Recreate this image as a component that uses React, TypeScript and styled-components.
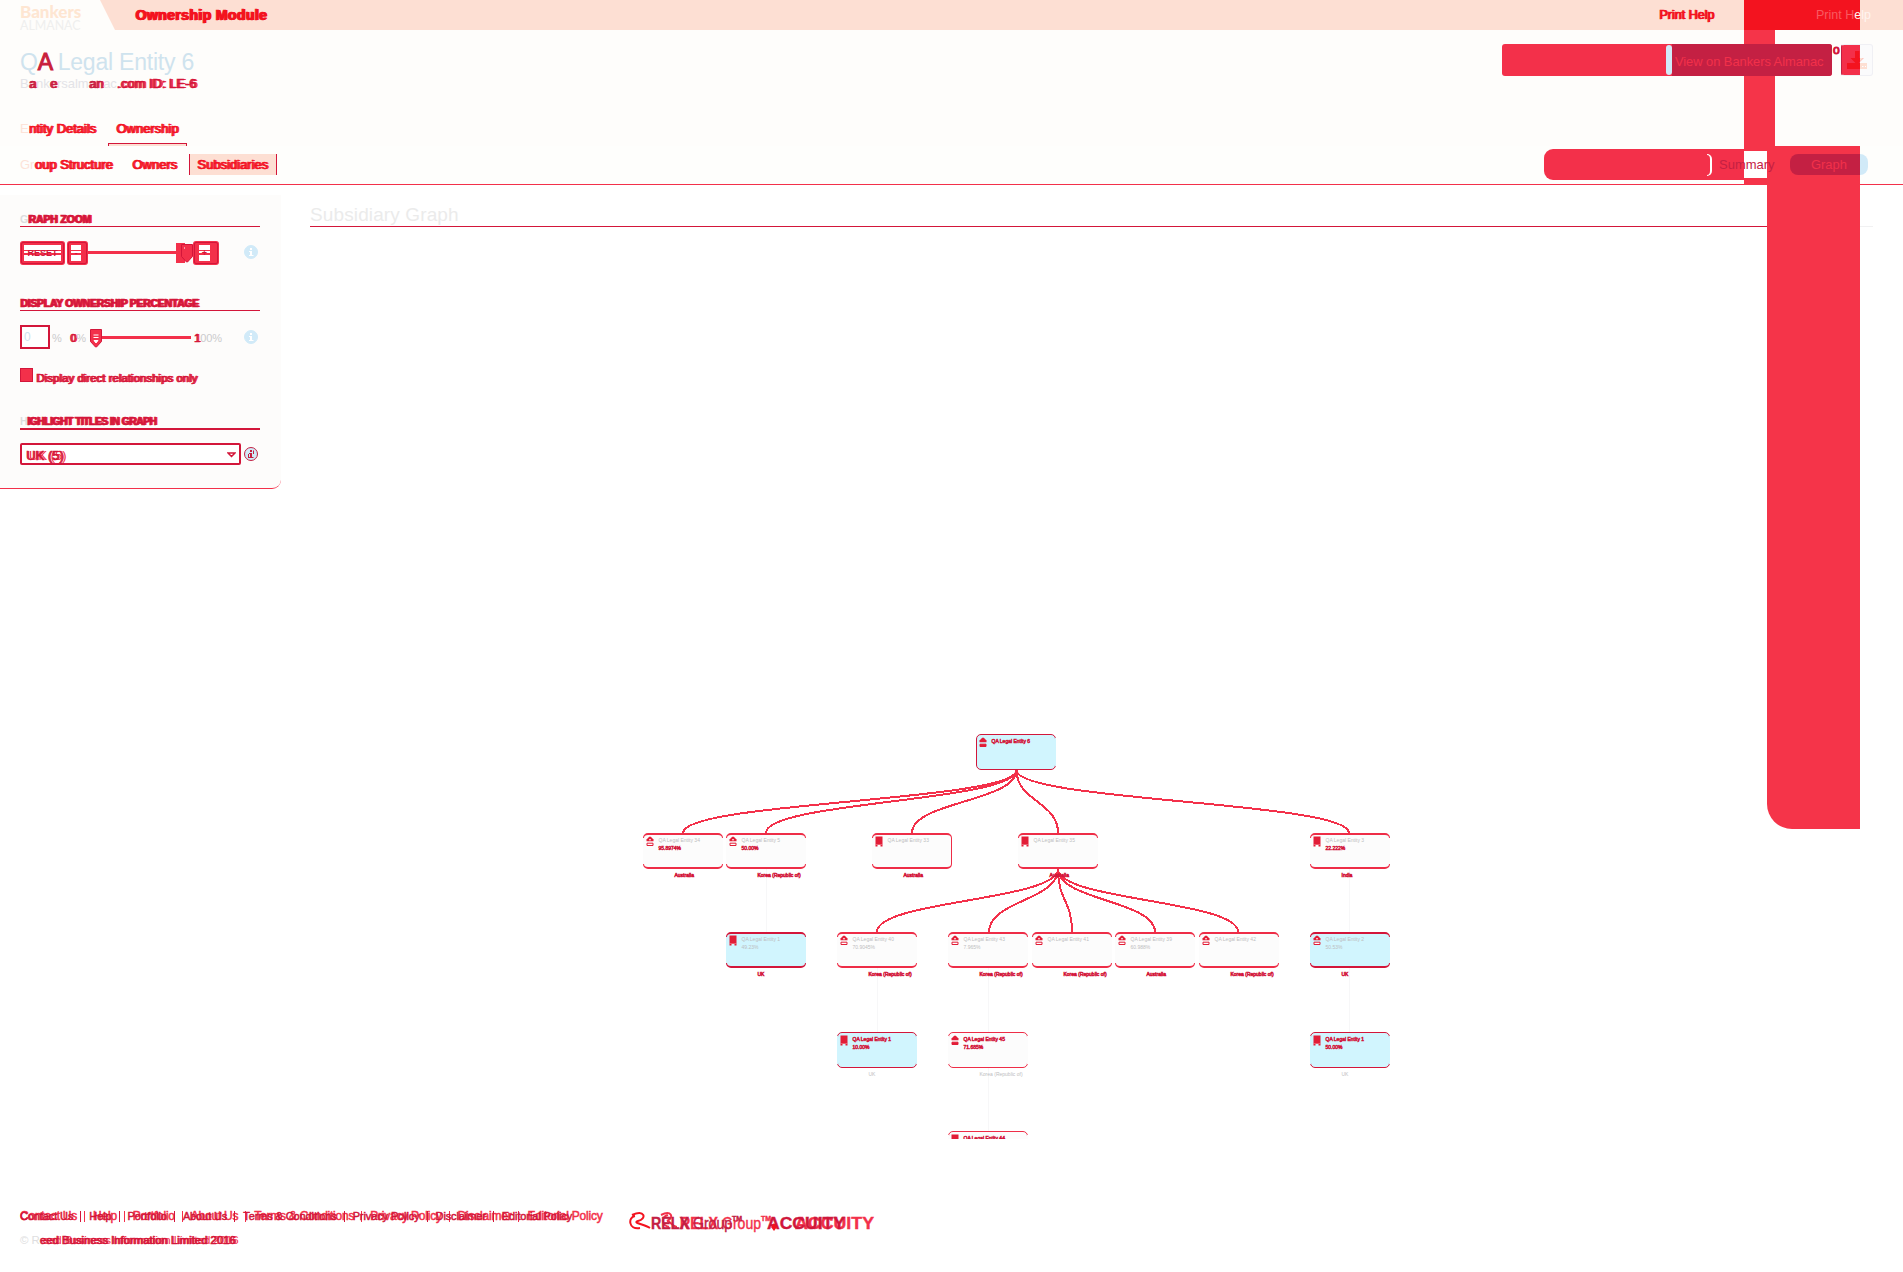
import React from "react";
import styled, { createGlobalStyle, css } from "styled-components";

const HOT = "#f3304a";
const PURE = "#f3131f";
const DEEP = "#d3163a";
const WINE = "#c42043";
const PEACH = "#fddfd3";
const SKY = "#d1eaf8";

const Global = createGlobalStyle`
  * { box-sizing: border-box; }
  body { margin: 0; background: #fff; font-family: "Liberation Sans", Arial, sans-serif; overflow: hidden; }
`;

const smear = css<{ $shift?: number; $c?: string; $g?: string }>`
  color: ${(p) => p.$c ?? DEEP};
  -webkit-text-stroke: 0.5px ${(p) => p.$c ?? DEEP};
  text-shadow: ${(p) => p.$shift ?? 1.5}px 0 ${(p) => p.$g ?? HOT}, 1px 0 ${(p) => p.$g ?? HOT};
`;

const Page = styled.div`
  position: relative;
  width: 1903px;
  height: 1272px;
  overflow: hidden;
  display: flex;
  flex-direction: column;
`;

const Band = styled.div<{ $x: number; $y: number; $w: number; $h: number; $c?: string; $r?: string }>`
  position: absolute;
  left: ${(p) => p.$x}px;
  top: ${(p) => p.$y}px;
  width: ${(p) => p.$w}px;
  height: ${(p) => p.$h}px;
  background: ${(p) => p.$c ?? "#f53449"};
  border-radius: ${(p) => p.$r ?? 0};
`;

const TopBar = styled.header`
  height: 30px;
  flex: none;
  display: flex;
  background: ${PEACH};
`;

const Brand = styled.div`
  width: 115px;
  height: 30px;
  padding: 4px 0 0 20px;
  background: #fefdfb;
  clip-path: polygon(0 0, 100px 0, 100% 100%, 0 100%);
  display: flex;
  flex-direction: column;
  font-family: Lato, sans-serif;
`;
const BrandTop = styled.span`
  font-size: 17px;
  line-height: 16px;
  font-weight: 900;
  color: #fee6d2;
`;
const BrandSub = styled.span`
  font-size: 12.4px;
  line-height: 12px;
  color: #efefee;
  white-space: nowrap;
`;

const ModuleName = styled.span`
  margin-left: 20px;
  font-size: 14px;
  line-height: 31px;
  font-weight: 700;
  letter-spacing: 0.4px;
  ${smear}
`;

const TopLinks = styled.div`
  position: relative;
  z-index: 2;
  margin-left: auto;
  width: 244px;
  display: flex;
  font-size: 12.5px;
  line-height: 30px;
`;
const HotLinks = styled.span`
  width: 157px;
  ${smear}
`;
const PaleLinks = styled.span`
  color: #fff5f0;
`;
const Tinted = styled.span<{ $c: string }>`
  color: ${(p) => p.$c};
`;

const Masthead = styled.section`
  height: 116px;
  flex: none;
  display: flex;
  justify-content: space-between;
  padding: 0 30px 0 20px;
  background: #fefdfb;
`;
const Identity = styled.div`
  display: flex;
  flex-direction: column;
`;
const Title = styled.h1`
  margin: 18px 0 0;
  font-size: 23px;
  line-height: 28px;
  font-weight: 400;
  color: #cfe3ee;
  letter-spacing: -0.22px;
  white-space: nowrap;
`;
const Struck = styled.span`
  color: #c9203b;
  -webkit-text-stroke: 1px #c9203b;
`;
const Ref = styled.div`
  margin-top: -1px;
  font-size: 13px;
  line-height: 18px;
  color: #e3e3e7;
  white-space: nowrap;
`;
const Smear = styled.span<{ $shift?: number; $c?: string; $g?: string }>`
  ${smear}
`;
const Faint = styled.span<{ $c?: string }>`
  color: ${(p) => p.$c ?? "#fde3d8"};
`;

const Tabs = styled.nav`
  display: flex;
  margin-top: 23px;
  font-size: 13px;
  gap: 10px;
`;
const Tab = styled.span<{ $active?: boolean }>`
  height: 26px;
  line-height: 26px;
  width: ${(p) => (p.$active ? "79px" : "78px")};
  padding-left: ${(p) => (p.$active ? "8px" : 0)};
  white-space: nowrap;
`;
const TabEdge = styled.div`
  width: 79px;
  height: 3px;
  margin: 1px 0 0 88px;
  background: ${PEACH};
  border: 1px solid ${DEEP};
  border-bottom: 0;
`;

const Actions = styled.div`
  position: relative;
  z-index: 2;
  display: flex;
  align-items: flex-start;
  padding-top: 14px;
`;
const AlmanacButton = styled.div`
  display: flex;
  width: 330px;
  height: 32px;
  background: ${HOT};
  border-radius: 3px;
  overflow: hidden;
`;
const Sliver = styled.i`
  flex: none;
  margin: 1px 0 0 164px;
  width: 6px;
  height: 30px;
  border-radius: 3px;
  background: ${SKY};
`;
const ButtonText = styled.span`
  flex: 1;
  padding-left: 3px;
  background: ${WINE};
  color: #f2304a;
  font-size: 13px;
  line-height: 35px;
  letter-spacing: -0.1px;
  white-space: nowrap;
`;
const Speck = styled.span`
  width: 9px;
  padding: 0 0 0 1px;
  font-size: 12px;
  line-height: 13px;
  color: ${DEEP};
  -webkit-text-stroke: 1px ${DEEP};
`;
const Download = styled.div`
  width: 32px;
  height: 32px;
  border: 1px solid #f0f0f4;
  border-left-color: ${WINE};
  border-radius: 3px;
  background: linear-gradient(90deg, ${HOT} 18px, #fbfbfc 18px);
`;

const SubNav = styled.nav`
  height: 39px;
  flex: none;
  display: flex;
  padding: 8px 32px 0 20px;
  background: linear-gradient(#fefefc 38px, ${HOT} 38px);
  font-size: 13px;
`;
const SubItem = styled.span<{ $w: number; $on?: boolean }>`
  width: ${(p) => p.$w}px;
  height: 21px;
  line-height: 21px;
  white-space: nowrap;
  ${(p) =>
    p.$on &&
    css`
      padding-left: 7px;
      background: ${PEACH};
      border: solid ${DEEP};
      border-width: 0 1px;
    `}
`;
const Toggle = styled.div`
  position: relative;
  z-index: 2;
  margin: -5px 0 0 auto;
  width: 327px;
  height: 31px;
  display: flex;
  align-items: center;
`;
const ToggleFill = styled.span`
  display: flex;
  justify-content: flex-end;
  align-items: center;
  width: 168px;
  height: 31px;
  border-radius: 9px 0 0 9px;
  background: ${HOT};
`;
const Bracket = styled.i`
  width: 5px;
  height: 22px;
  border: 2px solid #fff;
  border-left: 0;
  border-top-width: 1px;
  border-bottom-width: 1px;
  border-radius: 0 5px 5px 0;
`;
const ToggleText = styled.span`
  width: 78px;
  height: 31px;
  padding-left: 7px;
  font-size: 13px;
  line-height: 31px;
  color: ${WINE};
  background: linear-gradient(90deg, ${HOT} 32px, transparent 32px);
`;
const Pill = styled.span`
  width: 78px;
  height: 21px;
  border-radius: 8px;
  background: linear-gradient(90deg, ${WINE} 70px, ${SKY} 70px);
  color: #f2304a;
  font-size: 13px;
  line-height: 21px;
  text-align: center;
`;

const Body = styled.main`
  display: flex;
  height: 1000px;
  flex: none;
  align-items: flex-start;
`;
const Sidebar = styled.aside`
  width: 281px;
  height: 294px;
  margin-top: 10px;
  padding: 16px 21px 0 20px;
  background: #fdfcfb;
  border-bottom: 1px solid ${HOT};
  border-bottom-right-radius: 9px;
  display: flex;
  flex-direction: column;
`;
const GroupTitle = styled.h2<{ $thick?: boolean; $ls?: number; $mt?: number }>`
  margin: ${(p) => p.$mt ?? 0}px 0 0;
  height: ${(p) => (p.$thick ? 17 : 16)}px;
  font-size: 10.5px;
  line-height: 16px;
  font-weight: 700;
  letter-spacing: ${(p) => p.$ls ?? 0}px;
  border-bottom: ${(p) => (p.$thick ? 2 : 1)}px solid ${DEEP};
  white-space: nowrap;
`;
const Controls = styled.div<{ $h: number; $mt: number }>`
  display: flex;
  align-items: center;
  height: ${(p) => p.$h}px;
  margin-top: ${(p) => p.$mt}px;
`;
const Key = styled.span<{ $w: number; $l: number; $r: number; $gap?: number }>`
  flex: none;
  width: ${(p) => p.$w}px;
  height: 24px;
  margin-left: ${(p) => p.$gap ?? 0}px;
  border: solid ${HOT};
  border-width: 4px ${(p) => p.$r}px 4px ${(p) => p.$l}px;
  border-radius: 3px;
  outline: 1px solid ${DEEP};
  outline-offset: -2px;
  font-size: 9px;
  line-height: 16px;
  text-align: center;
  font-weight: 700;
  color: ${DEEP};
  background: linear-gradient(#fff 5px, ${HOT} 5px 6px, #fff 6px 8px, ${HOT} 8px 10px, #fff 10px);
`;
const Rail = styled.i<{ $w: number }>`
  width: ${(p) => p.$w}px;
  height: 3px;
  background: ${HOT};
`;
const Grip = styled.i<{ $w: number }>`
  width: ${(p) => p.$w}px;
  height: 20px;
  display: flex;
  justify-content: flex-end;
  background: ${(p) => (p.$w > 13 ? `linear-gradient(90deg, ${HOT} 9px, transparent 9px)` : "none")};
`;
const InfoSlot = styled.span`
  margin-left: auto;
  margin-right: 1px;
  width: 15px;
  height: 15px;
  display: flex;
`;
const PercentBox = styled.span`
  width: 30px;
  height: 24px;
  border: 2px solid ${DEEP};
  background: #fff;
  padding-left: 2px;
  line-height: 21px;
  font-size: 12px;
  color: #cfe3ee;
`;
const Unit = styled.span<{ $w: number; $pl: number }>`
  width: ${(p) => p.$w}px;
  padding: 1px 0 0 ${(p) => p.$pl}px;
  font-size: 11px;
  color: #cbcbcd;
  white-space: nowrap;
`;
const Check = styled.i`
  width: 13px;
  height: 14px;
  margin-right: 3px;
  background: ${HOT};
  border: 1px solid ${DEEP};
`;
const CheckText = styled.span`
  padding-top: 5px;
  font-size: 11.5px;
  white-space: nowrap;
`;
const SelectBox = styled.div`
  width: 221px;
  height: 22px;
  display: flex;
  align-items: center;
  justify-content: space-between;
  padding: 3px 3px 0 4px;
  border: 2px solid ${DEEP};
  border-radius: 2px;
  background: #fff;
  font-size: 13px;
`;

const GraphHead = styled.div`
  width: 1563px;
  height: 42px;
  margin-left: 29px;
  padding-top: 18px;
  background:
    linear-gradient(${DEEP}, ${DEEP}) 0 100% / 1457px 1px no-repeat,
    linear-gradient(#f1f1f2, #f1f1f2) 0 100% / 100% 1px no-repeat;
  font-size: 19px;
  line-height: 23px;
  color: #ebebeb;
  letter-spacing: 0.12px;
`;

const Canvas = styled.div`
  position: absolute;
  left: 0;
  top: 227px;
  width: 1740px;
  height: 912px;
  overflow: hidden;
`;
const Wires = styled.svg`
  position: absolute;
  left: 0;
  top: 0;
`;
const Node = styled.div<{ $x: number; $y: number; $blue?: boolean; $thin?: boolean; $edge?: "left" | "right" }>`
  position: absolute;
  left: ${(p) => p.$x - 0.5}px;
  top: ${(p) => p.$y - 227}px;
  width: 80px;
  height: 36px;
  display: flex;
  padding: ${(p) => (p.$thin ? 2 : 1)}px 0 0 2px;
  border: ${(p) => (p.$thin ? 1 : 2)}px solid ${(p) => (p.$blue ? DEEP : "#ee2d47")};
  border-left-width: 1px;
  border-right-width: 1px;
  border-radius: 5px;
  background: ${(p) => (p.$blue ? "#d1f5fe" : "#fcfcfc")};
  &::before,
  &::after {
    content: "";
    position: absolute;
    top: 3px;
    bottom: 3px;
    width: 1px;
    background: ${(p) => (p.$blue ? "#d1f5fe" : "#fcfcfc")};
  }
  &::before {
    left: -1px;
    display: ${(p) => (p.$edge === "left" ? "none" : "block")};
  }
  &::after {
    right: -1px;
    display: ${(p) => (p.$edge === "right" ? "none" : "block")};
  }
`;
const NodeText = styled.div`
  display: flex;
  flex-direction: column;
  margin: 0 0 0 5px;
  font-size: 5px;
  line-height: 8px;
  color: #bdbdc0;
  white-space: nowrap;
`;
const Line = styled.span<{ $hot?: boolean }>`
  ${(p) =>
    p.$hot &&
    css`
      color: ${DEEP};
      -webkit-text-stroke: 0.5px ${DEEP};
    `}
`;
const Country = styled.span<{ $x: number; $y: number; $hot?: boolean }>`
  position: absolute;
  left: ${(p) => p.$x - 0.5}px;
  top: ${(p) => p.$y - 227}px;
  font-size: 5px;
  line-height: 9px;
  white-space: nowrap;
  color: ${(p) => (p.$hot ? DEEP : "#bdbdc0")};
  -webkit-text-stroke: ${(p) => (p.$hot ? 0.6 : 0)}px ${DEEP};
`;

const Footer = styled.footer`
  position: absolute;
  left: 20px;
  top: 1207px;
  display: grid;
  grid-template-columns: 609px 260px;
  grid-template-rows: 24px 22px;
`;
const Layer = styled.div<{ $size: number; $c: string; $ls: number }>`
  grid-column: 1;
  grid-row: 1;
  display: flex;
  white-space: nowrap;
  font-size: ${(p) => p.$size}px;
  line-height: 19px;
  letter-spacing: ${(p) => p.$ls}px;
  color: ${(p) => p.$c};
  -webkit-text-stroke: 0.5px ${(p) => p.$c};
`;
const FootLink = styled.span<{ $last?: boolean }>`
  padding-right: 8px;
  margin-right: 8px;
  background: ${(p) => (p.$last ? "none" : "linear-gradient(currentColor, currentColor) 100% 4px / 1px 11px no-repeat")};
`;
const Copy = styled.div`
  grid-column: 1;
  grid-row: 2;
  font-size: 11.5px;
  line-height: 19px;
  letter-spacing: -0.08px;
  color: #dedee0;
  white-space: nowrap;
`;
const LogoSlot = styled.div`
  grid-column: 2;
  grid-row: 1 / 3;
`;

const Info = ({ hot }: { hot?: boolean }) => (
  <InfoSlot>
    <svg width="15" height="15" viewBox="0 0 15 15">
      <circle cx="7" cy="7" r="6.500" fill={SKY} stroke={hot ? WINE : SKY} />
      <path d="M6 6h2v5H6zM5 6h1v1H5zM5 10h4.500v1H5zM6 3h2v2H6z" fill={hot ? WINE : "#fff"} />
      {hot && <path d="M4.500 11V7M9.500 3.500V7" stroke={WINE} strokeWidth="1" />}
    </svg>
  </InfoSlot>
);

const GripShape = ({ lines }: { lines?: boolean }) => (
  <svg width="12" height="20" viewBox="0 0 12 20" overflow="visible">
    <g transform={lines ? "translate(0 2)" : "translate(0 1)"}>
      <path d="M.5.500h11v12l-5 5.500h-1l-5-5.500z" fill={HOT} stroke={DEEP} />
      {lines ? <path d="M3.500 6h5M3.500 8.500h5M4 11.500h4l-2 2.500z" stroke="#fff" fill="#fff" /> : <path d="M3 4h1" stroke="#fff" />}
    </g>
  </svg>
);

const NodeIcon = ({ kind, solid }: { kind: "bank" | "tower"; solid?: boolean }) => (
  <svg width="8" height="11" viewBox="0 0 8 11">
    {kind === "bank" ? (
      <>
        <path d="M.5 5.200V3.600L3.200.8h1.600l2.700 2.800v1.600z" fill="#e21d37" />
        {!solid && <path d="M3 3.800h2" stroke="#fff" strokeWidth="1" />}
        <path d="M1 7.200h6v2.300H1z" fill={solid ? "#e21d37" : "#fff"} stroke="#e21d37" />
      </>
    ) : (
      <>
        <path d="M.5.500h7v10H5.500V9h-3v1.500h-2z" fill="#e21d37" />
        <path d="M.5 8.500h7" stroke="#f7a0ab" strokeWidth=".5" />
      </>
    )}
  </svg>
);

interface Entity {
  x: number;
  y: number;
  n: string;
  pct?: string;
  place?: string;
  kind: "bank" | "tower";
  blue?: boolean;
  thin?: boolean;
  hotName?: boolean;
  hotPct?: boolean;
  coolPlace?: boolean;
  edge?: "left" | "right";
}

const entities: Entity[] = [
  { x: 976, y: 734, n: "6", kind: "bank", blue: true, thin: true, hotName: true, edge: "left" },
  { x: 643, y: 833, n: "34", pct: "95.8974%", place: "Australia", kind: "bank", hotPct: true },
  { x: 726, y: 833, n: "5", pct: "50.00%", place: "Korea (Republic of)", kind: "bank", hotPct: true },
  { x: 872, y: 833, n: "33", place: "Australia", kind: "tower", edge: "right" },
  { x: 1018, y: 833, n: "35", place: "Australia", kind: "tower" },
  { x: 1310, y: 833, n: "3", pct: "22.222%", place: "India", kind: "tower", hotPct: true },
  { x: 726, y: 932, n: "1", pct: "49.23%", place: "UK", kind: "tower", blue: true },
  { x: 837, y: 932, n: "40", pct: "70.9045%", place: "Korea (Republic of)", kind: "bank" },
  { x: 948, y: 932, n: "43", pct: "7.965%", place: "Korea (Republic of)", kind: "bank" },
  { x: 1032, y: 932, n: "41", place: "Korea (Republic of)", kind: "bank" },
  { x: 1115, y: 932, n: "39", pct: "60.988%", place: "Australia", kind: "bank" },
  { x: 1199, y: 932, n: "42", place: "Korea (Republic of)", kind: "bank" },
  { x: 1310, y: 932, n: "2", pct: "50.53%", place: "UK", kind: "bank", blue: true },
  { x: 837, y: 1032, n: "1", pct: "10.00%", place: "UK", kind: "tower", blue: true, thin: true, hotName: true, hotPct: true, coolPlace: true },
  { x: 948, y: 1032, n: "45", pct: "71.685%", place: "Korea (Republic of)", kind: "bank", thin: true, hotName: true, hotPct: true, coolPlace: true },
  { x: 1310, y: 1032, n: "1", pct: "50.00%", place: "UK", kind: "tower", blue: true, thin: true, hotName: true, hotPct: true, coolPlace: true },
  { x: 948, y: 1131, n: "44", kind: "tower", thin: true, hotName: true },
];

const stems = ["M766.500 869V932", "M877.500 968V1032", "M988.500 968V1131", "M1349.500 869V1032"];

const curve = (sx: number, sy: number, tx: number, ty: number) => {
  const mid = (sy + ty) / 2;
  return `M${sx} ${sy}C${sx} ${mid} ${tx} ${mid} ${tx} ${ty}`;
};

const footLinks = ["Contact Us", "Help", "Portfolio", "About Us", "Terms & Conditions", "Privacy Policy", "Disclaimer", "Editorial Policy"];

const App = () => (
  <>
    <Global />
    <Page>
      <TopBar>
        <Brand>
          <BrandTop>Bankers</BrandTop>
          <BrandSub>ALMANAC</BrandSub>
        </Brand>
        <ModuleName $c={PURE} $g={PURE}>Ownership Module</ModuleName>
        <TopLinks>
          <HotLinks $c={PURE} $g={PURE} $shift={1}>Print Help</HotLinks>
          <PaleLinks>
            <Tinted $c="#f95a60">Print H</Tinted>elp
          </PaleLinks>
        </TopLinks>
      </TopBar>

      <Masthead>
        <Identity>
          <Title>Q<Struck>A</Struck> Legal Entity 6</Title>
          <Ref>
            B<Smear $c={WINE}>a</Smear>nk<Smear $c={WINE}>e</Smear>rsalm<Smear $c={WINE}>an</Smear>ac
            <Smear $shift={2}>.com ID: LE-6</Smear>
          </Ref>
          <Tabs>
            <Tab><Faint>E</Faint><Smear $c={PURE}>ntity Details</Smear></Tab>
            <Tab $active><Smear $c={PURE}>Ownership</Smear></Tab>
          </Tabs>
          <TabEdge />
        </Identity>
        <Actions>
          <AlmanacButton>
            <Sliver />
            <ButtonText>View on Bankers Almanac</ButtonText>
          </AlmanacButton>
          <Speck>o</Speck>
          <Download>
            <svg width="30" height="30" viewBox="0 0 30 30">
              <path d="M5 18h20v6H5z" fill={PEACH} />
              <path d="M5 18h13v6H5zM13 6h4.500v7h4L15 19.500 8.500 13h4.500z" fill={PURE} />
              <path d="M18 13h3.500L18 16.500z" fill={PEACH} />
              <path d="M20 21.500h1.500M23 21.500h1" stroke="#fff" />
            </svg>
          </Download>
        </Actions>
      </Masthead>

      <SubNav>
        <SubItem $w={112}><Faint>Gr</Faint><Smear $c={PURE}>oup Structure</Smear></SubItem>
        <SubItem $w={57}><Smear $c={PURE}>Owners</Smear></SubItem>
        <SubItem $w={88} $on><Smear $c={PURE}>Subsidiaries</Smear></SubItem>
        <Toggle>
          <ToggleFill><Bracket /></ToggleFill>
          <ToggleText>Summary</ToggleText>
          <Pill>Graph</Pill>
        </Toggle>
      </SubNav>

      <Body>
        <Sidebar>
          <GroupTitle $ls={-0.15}><Faint $c="#dcdcde">G</Faint><Smear>RAPH ZOOM</Smear></GroupTitle>
          <Controls $h={25} $mt={13}>
            <Key $w={45} $l={4} $r={4}>RESET</Key>
            <Key $w={21} $l={4} $r={7} $gap={2}>-</Key>
            <Rail $w={88} />
            <Grip $w={17}><GripShape /></Grip>
            <Key $w={26} $l={6} $r={9}>+</Key>
            <Info />
          </Controls>
          <GroupTitle $mt={30} $ls={-0.3}><Smear>DISPLAY OWNERSHIP PERCENTAGE</Smear></GroupTitle>
          <Controls $h={24} $mt={14}>
            <PercentBox>0</PercentBox>
            <Unit $w={19} $pl={2}>%</Unit>
            <Unit $w={21} $pl={1}><Smear>0</Smear>%</Unit>
            <Grip $w={12}><GripShape lines /></Grip>
            <Rail $w={89} />
            <Unit $w={32} $pl={3}><Smear>1</Smear>00%</Unit>
            <Info />
          </Controls>
          <Controls $h={16} $mt={18}>
            <Check />
            <CheckText><Smear>Display direct relationships only</Smear></CheckText>
          </Controls>
          <GroupTitle $thick $mt={30} $ls={-0.6}>
            <Faint $c="#dcdcde">H</Faint><Smear>IGHLIGHT TITLES IN GRAPH</Smear>
          </GroupTitle>
          <Controls $h={22} $mt={13}>
            <SelectBox>
              <Smear $shift={3}>UK (5)</Smear>
              <svg width="9" height="7" viewBox="0 0 9 7"><path d="M1 1h7L4.500 4.500z" fill="#fff" stroke={DEEP} strokeWidth="1.500" /></svg>
            </SelectBox>
            <Info hot />
          </Controls>
        </Sidebar>
        <GraphHead>Subsidiary Graph</GraphHead>
      </Body>

      <Band $x={1744} $y={0} $w={116} $h={30} $c="#f3131f" />
      <Band $x={1744} $y={30} $w={31} $h={116} />
      <Band $x={1744} $y={146} $w={24} $h={5} />
      <Band $x={1744} $y={151} $w={24} $h={27} $c="#fff" />
      <Band $x={1744} $y={178} $w={24} $h={7} />
      <Band $x={1767} $y={146} $w={93} $h={683} $r="0 0 0 25px" />

      <Canvas>
        <Wires width="1740" height="912" viewBox="0 227 1740 912" fill="none">
          {stems.map((d) => <path key={d} d={d} stroke="#f7f7f8" />)}
          <g stroke={HOT} strokeWidth="2" shapeRendering="crispEdges">
            {[683, 766, 912, 1058, 1349].map((x) => <path key={x} d={curve(1016.5, 770, x, 833)} />)}
            {[877, 989, 1072, 1155, 1238].map((x) => <path key={x} d={curve(1058, 869, x, 932)} />)}
          </g>
          <path d="M1016.500 770l3.500 5h-7zM1058 870l4 6h-8z" fill={HOT} />
        </Wires>
        {entities.map((e, i) => (
          <React.Fragment key={i}>
            <Node $x={e.x} $y={e.y} $blue={e.blue} $thin={e.thin} $edge={e.edge}>
              <NodeIcon kind={e.kind} solid={e.thin} />
              <NodeText>
                <Line $hot={e.hotName}>QA Legal Entity {e.n}</Line>
                {e.pct && <Line $hot={e.hotPct}>{e.pct}</Line>}
              </NodeText>
            </Node>
            {e.place && <Country $x={e.x + 32} $y={e.y + 38} $hot={!e.coolPlace}>{e.place}</Country>}
          </React.Fragment>
        ))}
      </Canvas>

      <Footer>
        <Layer $size={12} $c={HOT} $ls={-0.23}>
          {footLinks.map((t, i) => <FootLink key={t} $last={i === 7}>{t}</FootLink>)}
        </Layer>
        <Layer $size={11} $c={DEEP} $ls={-0.11} aria-hidden>
          {footLinks.map((t, i) => <FootLink key={t} $last={i === 7}>{t}</FootLink>)}
        </Layer>
        <Copy>© R<Smear $shift={3}>eed Business Information Limited 2016</Smear></Copy>
        <LogoSlot>
          <svg width="260" height="30" viewBox="0 0 260 30" fontFamily="Liberation Sans">
            <g fill={HOT} stroke={HOT} strokeWidth=".4" fontSize="16">
              <path d="M40 20c-8-2-8-10-1-12M32 8c10-5 14 2 6 6 4 0 5 6 10 6" strokeWidth="2" fill="none" />
              <text x="51" y="22" fontWeight="700" textLength="38" lengthAdjust="spacingAndGlyphs">RELX</text>
              <text x="93" y="22" textLength="39" lengthAdjust="spacingAndGlyphs">Group</text>
              <text x="132" y="14" fontSize="7" fontWeight="700">TM</text>
              <text x="166" y="22" fontWeight="700" fontSize="17" textLength="79" lengthAdjust="spacingAndGlyphs">ACCUITY</text>
            </g>
            <g fill={WINE} stroke={WINE} strokeWidth=".4" fontSize="16">
              <path d="M11 21C-1 23-1 10 6 9M3 8c13-6 15 4 6 6-6 2 6 3 12 7" stroke={PURE} strokeWidth="2" fill="none" />
              <text x="22" y="22" fontWeight="700" textLength="38" lengthAdjust="spacingAndGlyphs">RELX</text>
              <text x="64" y="22" textLength="39" lengthAdjust="spacingAndGlyphs">Group</text>
              <text x="103" y="14" fontSize="7" fontWeight="700">TM</text>
              <text x="138" y="22" fontWeight="700" fontSize="17" fill={DEEP} textLength="78" lengthAdjust="spacingAndGlyphs">ACCUITY</text>
            </g>
            <path d="M145 16l3 4-3 4-3-4z" fill={PURE} />
          </svg>
        </LogoSlot>
      </Footer>
    </Page>
  </>
);

export default App;
